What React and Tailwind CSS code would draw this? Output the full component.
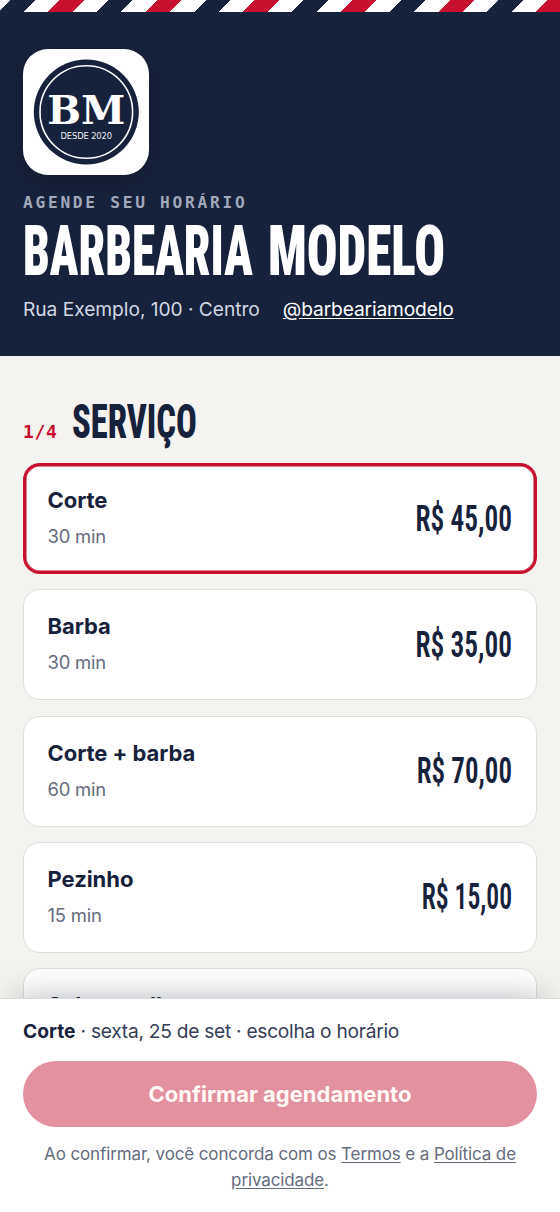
const services = [
	{ id: 1, name: "Corte", duration: "30 min", price: "R$ 45,00", fit: "scale-x-[0.76]" },
	{ id: 2, name: "Barba", duration: "30 min", price: "R$ 35,00", fit: "scale-x-[0.76]" },
	{ id: 3, name: "Corte + barba", duration: "60 min", price: "R$ 70,00", fit: "scale-x-[0.75]" },
	{ id: 4, name: "Pezinho", duration: "15 min", price: "R$ 15,00", fit: "scale-x-[0.71]" },
	{ id: 5, name: "Sobrancelha", duration: "15 min", price: "R$ 20,00", fit: "scale-x-[0.76]" },
];

const Logo = () => (
	<div className="size-[126px] rounded-[25px] bg-white shadow-[0_6px_20px_rgba(0,0,0,0.22)]">
		<svg viewBox="0 0 126 126" className="size-full">
			<circle cx="63.3" cy="63" r="52.5" fill="#16213b" />
			<circle cx="63.3" cy="63" r="46.3" fill="none" stroke="#fff" strokeWidth="1.6" />
			<text x="63.3" y="75" textAnchor="middle" fontFamily="DejaVu Serif, serif" fontWeight="700" fontSize="40" fill="#fff">BM</text>
			<text x="63.3" y="90.2" textAnchor="middle" fontFamily="DejaVu Sans, sans-serif" fontSize="8.4" textLength="51.5" fill="#f0f1f5">DESDE 2020</text>
		</svg>
	</div>
);

const ServiceCard = ({ service, selected }) => (
	<button
		type="button"
		className={
			selected
				? "flex h-[111px] w-full shrink-0 items-center justify-between rounded-[17px] border-[3px] border-[#c8102e] bg-white pr-[22.5px] pl-[21.5px] text-left shadow-[inset_0_0_0_0.5px_#c8102e]"
				: "flex h-[111px] w-full shrink-0 items-center justify-between rounded-[17px] border border-[#dcdcda] bg-white pr-[24.5px] pl-[23.5px] text-left"
		}
	>
		<span className="flex flex-col pb-px">
			<span className="text-[22px] leading-[37px] font-bold tracking-[-0.05px]">{service.name}</span>
			<span className="text-[18.4px] leading-[35px] tracking-[-0.2px] text-[#646c7e]">{service.duration}</span>
		</span>
		<span className={`${service.fit} origin-right font-['Roboto_Condensed',Roboto,sans-serif] text-[36px] leading-none font-semibold`}>
			{service.price}
		</span>
	</button>
);

export default function App() {
	const selectedId = 1;

	return (
		<div className="flex h-[1212px] w-full flex-col overflow-hidden bg-[#f5f3ef] font-[Inter,sans-serif] text-[#16213b]">
			<header className="h-[356px] shrink-0 bg-[#16213b]">
				<div className="h-[11.5px] bg-[repeating-linear-gradient(-45deg,#c8102e_0_17.25px,#fff_17.25px_34.5px,#16213b_34.5px_51.75px,#fff_51.75px_69px)]" />
				<div className="px-[23px] pt-[37.5px]">
					<Logo />
					<p className="mt-[18px] font-['DejaVu_Sans_Mono',monospace] text-[16.2px] leading-5 font-bold tracking-[2.72px] whitespace-nowrap text-[#a2a9bb]">
						AGENDE SEU HORÁRIO
					</p>
					<h1 className="mt-[3px] flex font-['Roboto_Condensed',Roboto,sans-serif] text-[70px] leading-[70px] font-black whitespace-pre text-white">
						<span className="w-[245px] shrink-0 origin-left scale-x-[0.675]">BARBEARIA </span>
						<span className="origin-left scale-x-[0.73]">MODELO</span>
					</h1>
					<div className="mt-[8px] flex gap-[23px] text-[19.2px] leading-[30px] whitespace-nowrap">
						<span className="tracking-[-0.04px] text-[#d3d8e3]">Rua Exemplo, 100 · Centro</span>
						<a href="#" className="tracking-[-0.14px] text-white underline underline-offset-[2px]">@barbeariamodelo</a>
					</div>
				</div>
			</header>

			<main className="min-h-0 flex-1 overflow-hidden px-[23px] pt-[40px]">
				<div className="flex h-[52px] items-baseline gap-[14px]">
					<span className="font-['DejaVu_Sans_Mono',monospace] text-[18px] font-bold tracking-[0.7px] text-[#c8102e]">1/4</span>
					<h2 className="origin-left scale-x-[0.705] font-['Roboto_Condensed',Roboto,sans-serif] text-[49px] leading-[52px] font-extrabold">
						SERVIÇO
					</h2>
				</div>
				<div className="mt-[15px] flex flex-col gap-[15.3px]">
					{services.map((service) => (
						<ServiceCard key={service.id} service={service} selected={service.id === selectedId} />
					))}
				</div>
			</main>

			<footer className="relative h-[214px] shrink-0 border-t border-[#d9d9d8] bg-white px-[23px] pt-[17px] shadow-[0_-12px_34px_-16px_rgba(22,33,50,0.4)]">
				<p className="text-[19.2px] leading-[30px] tracking-[-0.28px] text-[#353d58]">
					<strong className="font-bold tracking-normal text-[#16213b]">Corte</strong> · sexta, 25 de set · escolha o horário
				</p>
				<button type="button" className="mt-[15px] h-[66px] w-full rounded-full bg-[#e4919f] text-[22px] font-bold text-[#fffaf7]">
					Confirmar agendamento
				</button>
				<p className="mt-[14px] text-center text-[17px] leading-[26px] tracking-[-0.12px] text-[#646c7e]">
					Ao confirmar, você concorda com os <a href="#" className="underline underline-offset-[2px]">Termos</a> e a{" "}
					<a href="#" className="underline underline-offset-[2px]">Política de<br />privacidade</a>.
				</p>
			</footer>
		</div>
	);
}
